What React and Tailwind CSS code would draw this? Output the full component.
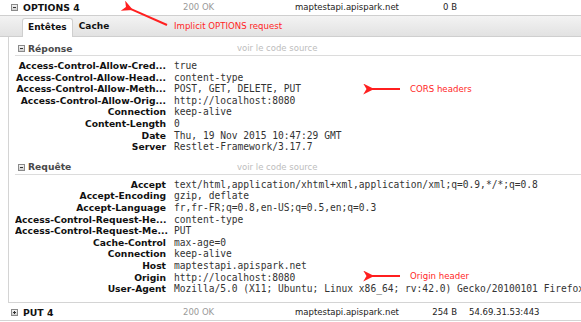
import React from 'react'

const response = [
  ['Access-Control-Allow-Cred...', 'true'],
  ['Access-Control-Allow-Head...', 'content-type'],
  ['Access-Control-Allow-Meth...', 'POST, GET, DELETE, PUT'],
  ['Access-Control-Allow-Orig...', 'http://localhost:8080'],
  ['Connection', 'keep-alive'],
  ['Content-Length', '0'],
  ['Date', 'Thu, 19 Nov 2015 10:47:29 GMT'],
  ['Server', 'Restlet-Framework/3.17.7'],
]

const request = [
  ['Accept', 'text/html,application/xhtml+xml,application/xml;q=0.9,*/*;q=0.8'],
  ['Accept-Encoding', 'gzip, deflate'],
  ['Accept-Language', 'fr,fr-FR;q=0.8,en-US;q=0.5,en;q=0.3'],
  ['Access-Control-Request-He...', 'content-type'],
  ['Access-Control-Request-Me...', 'PUT'],
  ['Cache-Control', 'max-age=0'],
  ['Connection', 'keep-alive'],
  ['Host', 'maptestapi.apispark.net'],
  ['Origin', 'http://localhost:8080'],
  ['User-Agent', 'Mozilla/5.0 (X11; Ubuntu; Linux x86_64; rv:42.0) Gecko/20100101 Firefox'],
]

function Toggle({ open }) {
  return (
    <span className="relative inline-block w-[7px] h-[7px] shrink-0 border border-[#8a8a8a] bg-gradient-to-b from-[#f4f4f4] to-[#cfcfcf]">
      <span className="absolute left-[1px] right-[1px] top-[2px] h-px bg-[#333]" />
      {!open && <span className="absolute top-[1px] bottom-[1px] left-[2px] w-px bg-[#333]" />}
    </span>
  )
}

function RequestRow({ open, method, size, address }) {
  return (
    <div className="flex items-center h-[15px] text-[8.5px] whitespace-nowrap">
      <div className="w-[183px] flex items-center gap-[5px] pl-[11px]">
        <Toggle open={open} />
        <span className="font-bold text-[9.3px] text-[#111]">{method}</span>
      </div>
      <div className="w-[112px] text-[#9a9a9a]">200 OK</div>
      <div className="w-[130px] text-[#222]">maptestapi.apispark.net</div>
      <div className="w-[32px] text-right text-[#222]">{size}</div>
      {address && <div className="ml-[12px] text-[#222]">{address}</div>}
    </div>
  )
}

function Section({ title, rows, className }) {
  return (
    <div className={className}>
      <div className="flex items-center h-[14px] border-b border-[#dcdcdc] pl-[3px] whitespace-nowrap">
        <Toggle open />
        <span className="ml-[3px] w-[209px] font-bold text-[9.2px] text-[#4a4a4a]">{title}</span>
        <span className="text-[8.5px] text-[#bdbdbd]">voir le code source</span>
      </div>
      <div className="mt-[4px] leading-[11.6px]">
        {rows.map(([name, value]) => (
          <div key={name} className="flex whitespace-nowrap overflow-hidden">
            <div className="w-[151px] shrink-0 text-right font-bold text-[9.2px] text-[#111]">{name}</div>
            <div className="ml-[8px] font-['DejaVu_Sans_Mono',monospace] text-[9.6px] text-[#333]">{value}</div>
          </div>
        ))}
      </div>
    </div>
  )
}

export default function App() {
  return (
    <div className="relative w-[581px] h-[322px] overflow-hidden bg-white font-['DejaVu_Sans',sans-serif]">
      <RequestRow open method="OPTIONS 4" size="0 B" />

      <div className="h-[22px] flex items-end pl-[22px] border-t border-b border-[#cfcfcf] bg-gradient-to-b from-[#f3f3f3] to-[#e2e2e2]">
        <div className="h-[19px] -mb-px px-[5px] flex items-center bg-white border border-b-0 border-[#cfcfcf] rounded-t-[3px] font-bold text-[9px] text-[#111]">
          Entêtes
        </div>
        <div className="h-[19px] px-[6px] flex items-center font-bold text-[9px] text-[#111]">Cache</div>
      </div>

      <div className="ml-[8px] h-[266px] border-l border-b border-[#d4d4d4] pt-[5px] pl-[6px] overflow-hidden">
        <Section title="Réponse" rows={response} />
        <Section title="Requête" rows={request} className="mt-[8px]" />
      </div>

      <div className="mt-[2px] border-b border-[#d4d4d4]">
        <RequestRow method="PUT 4" size="254 B" address="54.69.31.53:443" />
      </div>

      <span className="absolute left-[174px] top-[20px] text-[8.6px] text-[#ff1f1f] whitespace-nowrap">Implicit OPTIONS request</span>
      <span className="absolute left-[410px] top-[83px] text-[8.6px] text-[#ff1f1f] whitespace-nowrap">CORS headers</span>
      <span className="absolute left-[410px] top-[270px] text-[8.6px] text-[#ff1f1f] whitespace-nowrap">Origin header</span>

      <svg className="absolute inset-0 pointer-events-none" width="581" height="322">
        <defs>
          <marker id="head" viewBox="0 0 10 10" refX="2" refY="5" markerWidth="6" markerHeight="5.5" orient="auto-start-reverse">
            <path d="M0 5 L10 0 L7 5 L10 10 Z" fill="#ff1f1f" />
          </marker>
        </defs>
        <line x1="167" y1="25" x2="131" y2="9.2" stroke="#ff1f1f" strokeWidth="2" markerEnd="url(#head)" />
        <line x1="400" y1="89" x2="372" y2="89" stroke="#ff1f1f" strokeWidth="2" markerEnd="url(#head)" />
        <line x1="400" y1="276" x2="372" y2="276" stroke="#ff1f1f" strokeWidth="2" markerEnd="url(#head)" />
      </svg>
    </div>
  )
}
